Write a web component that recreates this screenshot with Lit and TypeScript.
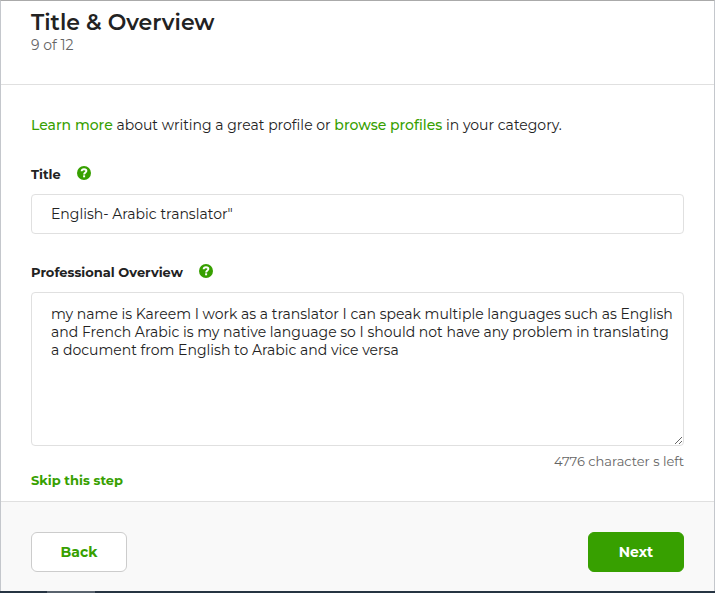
import { LitElement, html, css } from "lit";
import { customElement, property, state } from "lit/decorators.js";

const OVERVIEW =
  "my name is Kareem I work as a translator I can speak multiple languages such as English and French Arabic is my native language so I should not have any problem in translating a document from English to Arabic and vice versa";

@customElement("help-button")
class HelpButton extends LitElement {
  @property() label = "";

  static styles = css`
    :host {
      display: flex;
    }
    .help {
      display: flex;
      padding: 0 0 2px;
      border: 0;
      background: none;
      cursor: pointer;
    }
    .mark {
      width: 14px;
      height: 14px;
    }
  `;

  render() {
    return html`<button class="help" type="button" aria-label=${this.label}>
      <svg class="mark" viewBox="0 0 14 14" aria-hidden="true">
        <circle cx="7" cy="7" r="7" fill="#37a000" />
        <path
          d="M4.6 5.3C4.700 3.800 5.700 3.200 7 3.200s2.400.7 2.400 1.900C9.400 6.500 7.100 6.600 7.100 8.500"
          fill="none"
          stroke="#fff"
          stroke-width="1.900"
        />
        <rect x="6.100" y="9.300" width="2" height="2" fill="#fff" />
      </svg>
    </button>`;
  }
}

@customElement("app-root")
class AppRoot extends LitElement {
  @state() private headline = 'English- Arabic translator"';

  static styles = css`
    :host {
      display: block;
      font: 14px/20px Montserrat, Gotham, Inter, sans-serif;
      color: #222;
    }
    * {
      box-sizing: border-box;
    }
    .dialog {
      display: flex;
      flex-direction: column;
      min-height: 100vh;
      border: 1px solid #c4c7cc;
      border-top-color: #aaa;
      border-bottom: 0;
      background: #fff;
    }
    .header {
      padding: 8px 30px 31px;
      border-bottom: 1px solid #e0e0e0;
    }
    .heading {
      margin: 0;
      font-size: 22px;
      line-height: 28px;
      font-weight: 600;
    }
    .progress {
      margin: 0;
      line-height: 16px;
      color: #656565;
    }
    .content {
      flex: 1;
      padding: 30px 30px 11px;
    }
    .intro {
      margin: 0 0 29px;
    }
    a {
      color: #37a000;
      font-weight: 500;
      text-decoration: none;
    }
    .label-row {
      display: flex;
      align-items: center;
      gap: 16px;
      margin-bottom: 10px;
    }
    .label {
      font-size: 13px;
      font-weight: 700;
    }
    .field {
      display: block;
      width: 100%;
      border: 1px solid #e0e0e0;
      border-radius: 4px;
      background: #fff;
      color: inherit;
      font: inherit;
      outline: 0;
    }
    .text {
      height: 40px;
      margin-bottom: 28px;
      padding: 0 19px;
    }
    .area {
      height: 154px;
      padding: 12px 6px 12px 19px;
      line-height: 18px;
      resize: vertical;
    }
    .counter {
      margin: 6px 0 0;
      font-size: 13px;
      line-height: 18px;
      color: #656565;
      text-align: right;
    }
    .skip {
      font-size: 13px;
      font-weight: 700;
    }
    .footer {
      display: flex;
      justify-content: space-between;
      padding: 30px 30px 19px;
      border-top: 1px solid #e0e0e0;
      background: #f9f9f9;
    }
    .button {
      min-width: 96px;
      height: 40px;
      border: 1px solid #ccc;
      border-radius: 6px;
      background: #fff;
      color: #37a000;
      font: inherit;
      font-weight: 700;
      cursor: pointer;
    }
    .primary {
      border-color: #37a000;
      background: #37a000;
      color: #fff;
    }
    .edge {
      display: flex;
      height: 2px;
      margin: 0 -1px;
      padding-left: 47px;
      background: #263442;
    }
    .edge-tab {
      width: 48px;
      background: #59636e;
    }
  `;

  private onHeadline(e: Event) {
    this.headline = (e.target as HTMLInputElement).value;
  }

  render() {
    return html`<div class="dialog">
      <header class="header">
        <h1 class="heading">Title &amp; Overview</h1>
        <p class="progress">9 of 12</p>
      </header>
      <main class="content">
        <p class="intro">
          <a href="#learn">Learn more</a> about writing a great profile or
          <a href="#profiles">browse profiles</a> in your category.
        </p>
        <div class="label-row">
          <label class="label" for="headline">Title</label>
          <help-button label="Help with title"></help-button>
        </div>
        <input class="field text" id="headline" type="text" .value=${this.headline} @input=${this.onHeadline} />
        <div class="label-row">
          <label class="label" for="overview">Professional Overview</label>
          <help-button label="Help with professional overview"></help-button>
        </div>
        <textarea class="field area" id="overview" spellcheck="false" .value=${OVERVIEW}></textarea>
        <p class="counter">4776 character s left</p>
        <a class="skip" href="#skip">Skip this step</a>
      </main>
      <footer class="footer">
        <button class="button" type="button">Back</button>
        <button class="button primary" type="button">Next</button>
      </footer>
      <div class="edge"><span class="edge-tab"></span></div>
    </div>`;
  }
}
